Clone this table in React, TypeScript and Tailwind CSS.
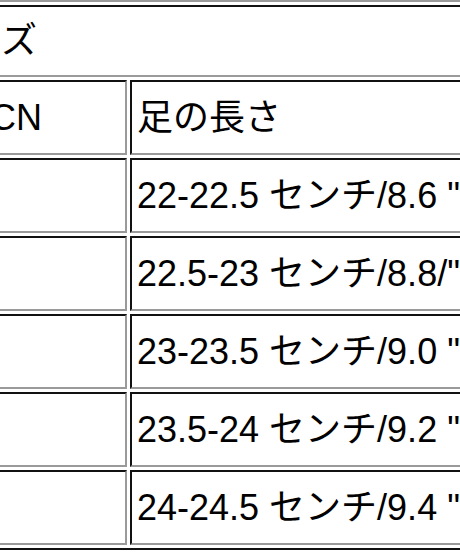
import React from "react";

const rows = [
	{ size: "35/225", foot: '22-22.5 センチ/8.6 ""' },
	{ size: "36/230", foot: '22.5-23 センチ/8.8/""' },
	{ size: "37/235", foot: '23-23.5 センチ/9.0 ""' },
	{ size: "38/240", foot: '23.5-24 センチ/9.2 ""' },
	{ size: "39/245", foot: '24-24.5 センチ/9.4 ""' },
];

const cell =
	"border-2 border-t-[#111] border-l-[#111] border-b-[#9a9a9a] border-r-[#9a9a9a] px-[5px] align-middle whitespace-nowrap text-left font-normal";

const App = () => {
	return (
		<div className="w-[460px] h-[552px] overflow-hidden bg-white text-black font-['Liberation_Sans','Noto_Sans_CJK_JP',sans-serif] text-[36px] leading-none">
			<table className="ml-[-82px] w-[647px] min-w-[647px] table-fixed border-separate border-spacing-[3px] border-2 border-t-[#9a9a9a] border-l-[#9a9a9a] border-b-[#111] border-r-[#111]">
				<colgroup>
					<col className="w-[204px]" />
					<col className="w-[430px]" />
				</colgroup>
				<tbody>
					<tr>
						<th colSpan={2} className={`${cell} h-[72px]`}>
							サイズ
						</th>
					</tr>
					<tr>
						<td className={`${cell} h-[75px]`}>EU/CN</td>
						<td className={`${cell} h-[75px]`}>足の長さ</td>
					</tr>
					{rows.map(row => (
						<tr key={row.size}>
							<td className={`${cell} h-[75px]`}>
								<span className="invisible">{row.size}</span>
							</td>
							<td className={`${cell} h-[75px]`}>{row.foot}</td>
						</tr>
					))}
				</tbody>
			</table>
		</div>
	);
};

export default App;
